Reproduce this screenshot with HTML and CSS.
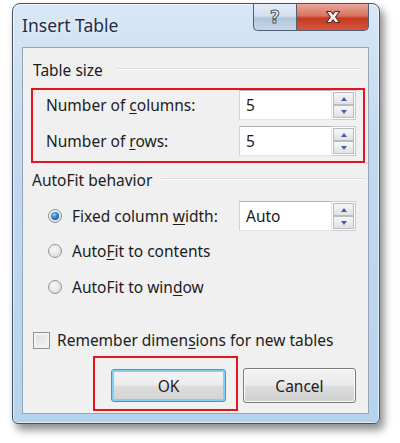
FILE: index.html
```html
<!DOCTYPE html>
<html>
<head>
<meta charset="utf-8">
<link rel="stylesheet" href="styles.css">
</head>
<body>
<div class="window">
  <div class="titlebar">
    <div class="title">Insert Table</div>
    <div class="spacer"></div>
    <div class="tb-btn help"><span class="help-glyph">?</span></div>
    <div class="tb-btn close">
      <svg width="20" height="16" viewBox="0 0 20 16">
        <path d="M3.5 2.5 L8 2.5 L10 5.2 L12 2.5 L16.5 2.5 L12.6 8 L16.5 13.5 L12 13.5 L10 10.8 L8 13.5 L3.5 13.5 L7.4 8 Z" fill="#f6f2f2" stroke="#5e2620" stroke-width="1.1" stroke-linejoin="round"/>
      </svg>
    </div>
  </div>
  <div class="panel">
    <div class="group-head first"><span>Table size</span><div class="etch"></div></div>
    <div class="hl-box size-box">
      <div class="field-row">
        <div class="label-col">Number of <u>c</u>olumns:</div>
        <div class="spin">
          <div class="spin-input">5</div>
          <div class="spin-btns"><div class="sb up"><i></i></div><div class="sb down"><i></i></div></div>
        </div>
      </div>
      <div class="field-row">
        <div class="label-col">Number of <u>r</u>ows:</div>
        <div class="spin">
          <div class="spin-input">5</div>
          <div class="spin-btns"><div class="sb up"><i></i></div><div class="sb down"><i></i></div></div>
        </div>
      </div>
    </div>
    <div class="group-head second"><span>AutoFit behavior</span><div class="etch"></div></div>
    <div class="radios">
      <div class="radio-row">
        <div class="radio-part"><span class="radio on"></span><span>Fixed column <u>w</u>idth:</span></div>
        <div class="spin">
          <div class="spin-input">Auto</div>
          <div class="spin-btns"><div class="sb up"><i></i></div><div class="sb down"><i></i></div></div>
        </div>
      </div>
      <div class="radio-row">
        <div class="radio-part"><span class="radio"></span><span>Auto<u>F</u>it to contents</span></div>
      </div>
      <div class="radio-row third">
        <div class="radio-part"><span class="radio"></span><span>AutoFit to win<u>d</u>ow</span></div>
      </div>
    </div>
    <div class="check-row"><span class="checkbox"></span><span>Remember dimen<u>s</u>ions for new tables</span></div>
    <div class="btn-row">
      <div class="hl-box ok-box"><div class="btn ok">OK</div></div>
      <div class="btn cancel">Cancel</div>
    </div>
  </div>
</div>
</body>
</html>
```
FILE: styles.css
```css
* { box-sizing: border-box; }
body {
  margin: 0;
  background: #ffffff;
  font-family: "Noto Sans", "Open Sans", sans-serif;
  font-size: 15.5px;
  color: #1c1c1c;
  width: 400px;
  height: 443px;
  overflow: hidden;
}
u { text-decoration: underline; text-underline-offset: 2px; text-decoration-thickness: 1px; }

.window {
  margin: 3px 0 0 12px;
  width: 368px;
  height: 421px;
  border: 1px solid #46525e;
  border-radius: 8px 8px 6px 6px;
  background: linear-gradient(180deg, #d8e7f5 0%, #c2daf0 30%, #b6d3ee 100%);
  box-shadow: 4px 6px 9px rgba(0,0,0,0.45), inset 0 0 0 1px rgba(255,255,255,0.6);
  padding: 0 10px 9px 9px;
  display: flex;
  flex-direction: column;
}
.titlebar {
  height: 43px;
  display: flex;
  align-items: flex-start;
  flex: none;
}
.title {
  margin-top: 11px;
  line-height: 20px;
  font-size: 17.5px;
  color: #262a48;
  text-shadow: 0 0 6px rgba(255,255,255,0.9);
}
.spacer { flex: 1; }
.tb-btn {
  height: 27px;
  border: 1px solid #4f5f70;
  border-top: none;
  display: flex;
  align-items: center;
  justify-content: center;
}
.help {
  width: 43px;
  border-radius: 0 0 0 5px;
  border-right: none;
  background: linear-gradient(180deg, #e6eef7 0%, #d2e0ee 45%, #b2c6da 55%, #c3d6ea 100%);
}
.help-glyph {
  font-family: "DejaVu Sans", sans-serif;
  font-weight: bold;
  font-size: 17px;
  line-height: 1;
  color: #eef2f6;
  -webkit-text-stroke: 1px #4c5866;
}
.close {
  width: 73px;
  border-radius: 0 0 5px 0;
  background: linear-gradient(180deg, #e9a89c 0%, #d8735f 45%, #c63a24 55%, #d4563e 100%);
}

.panel {
  width: 347px;
  height: 367px;
  border: 1px solid #96a6b8;
  background: #f0f0f0;
  display: flex;
  flex-direction: column;
  flex: none;
}
.group-head {
  display: flex;
  align-items: center;
  line-height: 20px;
  height: 20px;
  color: #1c1c1c;
}
.group-head.first { margin: 12px 7px 0 10px; }
.group-head.first .etch { margin-left: 14px; }
.group-head.second { margin: 7px 3px 0 9px; }
.etch {
  flex: 1;
  height: 2px;
  border-top: 1px solid #d5dce2;
  border-bottom: 1px solid #ffffff;
  margin-left: 9px;
  margin-top: -2px;
}
.hl-box { border: 2px solid #e2151f; }
.size-box {
  margin: 8px 0 0 8px;
  width: 334px;
  padding: 0 0 5px 13px;
  display: flex;
  flex-direction: column;
  gap: 6px;
}
.field-row {
  display: flex;
  align-items: center;
  height: 30px;
}
.label-col { width: 193px; }
.spin {
  display: flex;
  height: 30px;
  width: 117px;
}
.spin-input {
  flex: 1;
  background: #ffffff;
  border: 1px solid #e2e6ea;
  border-top-color: #aeb2b8;
  border-left-color: #d0d4da;
  padding-left: 6px;
  line-height: 28px;
  color: #1a1a1a;
}
.spin-btns {
  width: 24px;
  display: flex;
  flex-direction: column;
  border: 1px solid #c8ccd0;
  border-left: none;
  padding: 1px;
  background: #ffffff;
}
.sb {
  flex: 1;
  background: linear-gradient(180deg, #f6f6f6, #e2e2e2);
  border: 1px solid #b8bcc0;
  display: flex;
  align-items: center;
  justify-content: center;
}
.sb i {
  width: 0; height: 0;
  border-left: 3.5px solid transparent;
  border-right: 3.5px solid transparent;
}
.sb.up i { border-bottom: 4px solid #4a5cae; }
.sb.down i { border-top: 4px solid #4a5cae; }

.radios {
  margin: 11px 0 0 25px;
  display: flex;
  flex-direction: column;
  gap: 5px;
}
.radio-row {
  display: flex;
  align-items: center;
  height: 30px;
}
.radio-row.third { margin-top: 1px; }
.radio-part {
  display: flex;
  align-items: center;
  gap: 10px;
  width: 191px;
}
.radio {
  width: 14px;
  height: 14px;
  border-radius: 50%;
  border: 1px solid #8f9497;
  background: radial-gradient(circle at 40% 35%, #f8f8f8 0%, #e4e4e4 60%, #cfd1d3 100%);
  display: flex;
  align-items: center;
  justify-content: center;
  flex: none;
}
.radio.on::after {
  content: "";
  width: 8px;
  height: 8px;
  border-radius: 50%;
  background: radial-gradient(circle at 40% 35%, #9ad2f6 0%, #2f7ad0 45%, #16498e 100%);
}
.check-row {
  margin: 28px 0 0 10px;
  display: flex;
  align-items: center;
  height: 20px;
  gap: 7px;
}
.checkbox {
  width: 17px;
  height: 17px;
  border: 1px solid #8f9497;
  background: linear-gradient(135deg, #dcdcdc, #f6f6f6);
  box-shadow: inset 0 0 0 2px #f2f2f2;
  flex: none;
}
.btn-row {
  margin: 6px 0 0 70px;
  display: flex;
  align-items: flex-start;
  gap: 5px;
}
.ok-box {
  padding: 11px 10px 7px 16px;
}
.btn {
  display: flex;
  align-items: center;
  justify-content: center;
  border-radius: 3px;
  color: #1c1c1c;
}
.ok {
  width: 115px;
  height: 33px;
  border: 1px solid #3a9bd4;
  box-shadow: inset 0 0 0 2px #7fd0f2;
  background: linear-gradient(180deg, #f4f4f4 0%, #ececec 48%, #dcdcdc 52%, #d4d4d4 100%);
}
.cancel {
  margin-top: 12px;
  width: 113px;
  height: 35px;
  border: 1px solid #7a7a7a;
  box-shadow: inset 0 0 0 1px #fbfbfb;
  background: linear-gradient(180deg, #f2f2f2 0%, #ebebeb 48%, #dddddd 52%, #cfcfcf 100%);
}
```
